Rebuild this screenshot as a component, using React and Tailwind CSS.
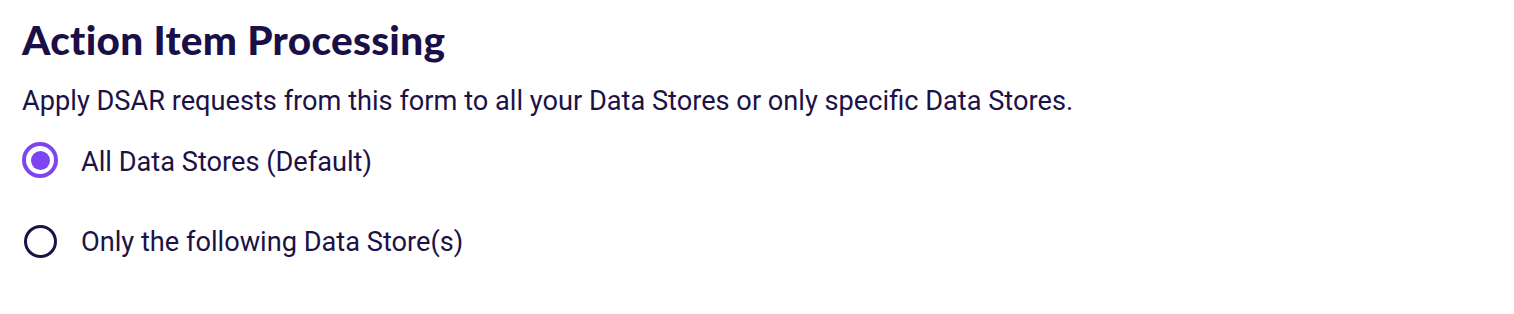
export default function App() {
  return (
    <div className="w-[1514px] h-[314px] bg-white px-[22px] pt-[14px] text-[#1c1246]" style={{ fontFamily: "Roboto, 'Liberation Sans', sans-serif" }}>
      <h1 className="text-[40.5px] leading-[52px] font-black tracking-[0.3px] text-[#1a0f47]" style={{ fontFamily: "Lato, 'Liberation Sans', sans-serif" }}>
        Action Item Processing
      </h1>
      <p className="mt-[18px] text-[27.2px] leading-[34px]">
        Apply DSAR requests from this form to all your Data Stores or only specific Data Stores.
      </p>
      <div className="mt-[24px] flex flex-col gap-[45px]">
        <label className="flex items-center gap-[23px] h-[36px]">
          <span className="w-[36px] h-[36px] rounded-full border-[4px] border-[#7c45ef] flex items-center justify-center">
            <span className="w-[19px] h-[19px] rounded-full bg-[#7c45ef]" />
          </span>
          <span className="text-[27.2px] leading-[34px] mt-[4px]">All Data Stores (Default)</span>
        </label>
        <label className="flex items-center gap-[23px] h-[36px]">
          <span className="w-[36px] h-[36px] flex items-center justify-center">
            <span className="w-[33px] h-[33px] rounded-full border-[3px] border-[#1c1246]" />
          </span>
          <span className="text-[27.2px] leading-[34px] mt-[2px]">Only the following Data Store(s)</span>
        </label>
      </div>
    </div>
  );
}
